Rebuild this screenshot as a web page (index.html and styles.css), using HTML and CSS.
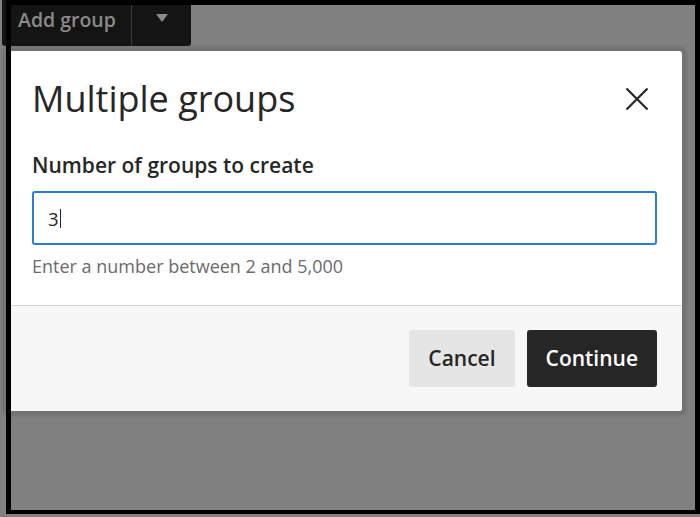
FILE: index.html
```html
<!DOCTYPE html>
<html lang="en">
<head>
    <meta charset="UTF-8">
    <meta name="viewport" content="width=device-width, initial-scale=1.0">
    <title>Multiple groups</title>
    <link rel="stylesheet" href="styles.css">
</head>
<body>
    <div class="page">
        <div class="toolbar">
            <div class="add-group">
                <span class="add-group-label">Add group</span>
                <span class="add-group-menu"><span class="caret"></span></span>
            </div>
        </div>
    </div>

    <!-- Modal dialog -->
    <div class="modal">
        <div class="modal-header">
            <h2 class="modal-title">Multiple groups</h2>
            <button class="close-btn" aria-label="Close">
                <svg width="24" height="24" viewBox="0 0 24 24">
                    <path d="M1.5 1.5L22.5 22.5M22.5 1.5L1.5 22.5" stroke="#262626" stroke-width="2.2" fill="none"/>
                </svg>
            </button>
        </div>
        <div class="modal-body">
            <label class="field-label">Number of groups to create</label>
            <div class="field-input">
                <span>3</span><span class="text-cursor"></span>
            </div>
            <p class="field-hint">Enter a number between 2 and 5,000</p>
        </div>
        <div class="modal-footer">
            <button class="btn btn-cancel">Cancel</button>
            <button class="btn btn-continue">Continue</button>
        </div>
    </div>

    <div class="frame"></div>
</body>
</html>
```

FILE: styles.css
```css
body {
    font-family: "Open Sans", "Noto Sans", sans-serif;
    margin: 0;
    width: 700px;
    height: 517px;
    overflow: hidden;
    position: relative;
    background-color: #808080;
    color: #262626;
}
.page {
    height: 100%;
}
.toolbar {
    padding-left: 2px;
}
.add-group {
    display: flex;
    width: 189px;
    height: 46px;
    background-color: #141414;
    border-radius: 0 0 3px 3px;
}
.add-group-label {
    padding: 6px 0 0 16px;
    width: 113px;
    font-size: 19.5px;
    font-weight: 600;
    color: #8a8a8a;
    border-right: 1px solid #3a3a3a;
}
.add-group-menu {
    flex: 1;
    display: flex;
    justify-content: center;
    padding-top: 14px;
}
.caret {
    width: 0;
    height: 0;
    border-left: 6px solid transparent;
    border-right: 6px solid transparent;
    border-top: 8px solid #8a8a8a;
}
.modal {
    position: absolute;
    left: 7px;
    top: 51px;
    width: 675px;
    background: white;
    border-radius: 3px;
    box-shadow: 0 0 3px 5px rgba(0,0,0,0.1);
    overflow: hidden;
}
.modal-header {
    display: flex;
    justify-content: space-between;
    align-items: center;
    padding: 23px 25px 0 25px;
}
.modal-title {
    margin: 0;
    font-size: 36px;
    font-weight: 400;
    line-height: 49px;
}
.close-btn {
    width: 40px;
    height: 40px;
    padding: 0;
    border: none;
    background: none;
    display: flex;
    align-items: center;
    justify-content: center;
    cursor: pointer;
}
.modal-body {
    padding: 29px 25px 26px 25px;
}
.field-label {
    display: block;
    font-size: 21px;
    font-weight: 600;
    line-height: 27px;
    margin-bottom: 12px;
}
.field-input {
    display: flex;
    align-items: center;
    height: 50px;
    padding: 0 14px;
    border: 2px solid #2b7dd6;
    border-radius: 3px;
    font-size: 18.5px;
}
.text-cursor {
    width: 1px;
    height: 19px;
    margin-left: 1px;
    background-color: #262626;
}
.field-hint {
    margin: 9px 0 0 0;
    font-size: 18px;
    line-height: 25px;
    color: #6b6b6b;
}
.modal-footer {
    display: flex;
    justify-content: flex-end;
    gap: 12px;
    padding: 24px 25px;
    background-color: #f7f7f7;
    border-top: 1px solid #d4d4d4;
}
.btn {
    font-family: inherit;
    font-size: 21px;
    font-weight: 600;
    line-height: 27px;
    padding: 15px 19px;
    border: none;
    border-radius: 3px;
    cursor: pointer;
}
.btn-cancel {
    background-color: #e5e5e5;
    color: #262626;
}
.btn-continue {
    background-color: #262626;
    color: white;
}
.frame {
    position: absolute;
    left: 6px;
    top: 0;
    width: 684px;
    height: 505px;
    border-top: 5px solid #000;
    border-left: 5px solid #000;
    border-right: 5px solid #000;
    border-bottom: 4px solid #000;
    pointer-events: none;
}
```
